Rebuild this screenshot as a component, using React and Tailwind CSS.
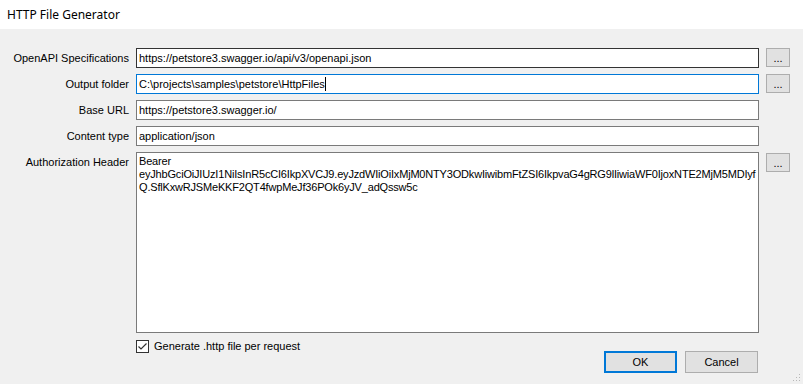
import React from "react";

const font = { fontFamily: '"Liberation Sans", Arial, sans-serif' };

function Label({ children }) {
  return (
    <div className="h-[20px] flex items-center justify-end text-[11px] text-black whitespace-nowrap leading-[13px]">
      {children}
    </div>
  );
}

function TextBox({ value, border = "border-[#7a7a7a]", caret = false }) {
  return (
    <div className={`h-[20px] border ${border} bg-white flex items-center pl-[2px] text-[11px] leading-[13px] text-black whitespace-nowrap overflow-hidden`}>
      <span>{value}</span>
      {caret && <span className="inline-block w-px h-[14px] bg-black" />}
    </div>
  );
}

function DotsButton() {
  return (
    <div className="w-[24px] h-[19px] border border-[#adadad] bg-[#e1e1e1] flex items-center justify-center text-[11px] leading-[13px] text-black pt-[2px]">
      ...
    </div>
  );
}

export default function App() {
  return (
    <div className="relative w-[803px] h-[384px] bg-[#f0f0f0] flex flex-col overflow-hidden" style={font}>
      <div className="h-[29px] bg-white flex items-center pl-[7px] text-[12px] text-black" style={{ fontFamily: '"Noto Sans", "Open Sans", sans-serif' }}>
        HTTP File Generator
      </div>
      <div className="pt-[19px] grid grid-cols-[126px_623px_24px] gap-x-[7px] gap-y-[6px] pl-0">
        <div className="pr-[1px] -mr-[4px]"><Label>OpenAPI Specifications</Label></div>
        <div className="ml-[3px] -mr-[3px]"><TextBox value="https://petstore3.swagger.io/api/v3/openapi.json" border="border-[#333333]" /></div>
        <div className="ml-[3px]"><DotsButton /></div>

        <div className="pr-[1px] -mr-[4px]"><Label>Output folder</Label></div>
        <div className="ml-[3px] -mr-[3px]"><TextBox value="C:\projects\samples\petstore\HttpFiles" border="border-[#0078d7]" caret /></div>
        <div className="ml-[3px]"><DotsButton /></div>

        <div className="pr-[1px] -mr-[4px]"><Label>Base URL</Label></div>
        <div className="ml-[3px] -mr-[3px]"><TextBox value="https://petstore3.swagger.io/" /></div>
        <div />

        <div className="pr-[1px] -mr-[4px]"><Label>Content type</Label></div>
        <div className="ml-[3px] -mr-[3px]"><TextBox value="application/json" /></div>
        <div />

        <div className="pr-[1px] -mr-[4px]"><Label>Authorization Header</Label></div>
        <div className="ml-[3px] -mr-[3px]">
          <div className="h-[181px] border border-[#7a7a7a] bg-white pt-[2px] pl-[2px] text-[11px] leading-[13px] text-black whitespace-nowrap overflow-hidden tracking-[-0.18px]">
            <div>Bearer</div>
            <div>eyJhbGciOiJIUzI1NiIsInR5cCI6IkpXVCJ9.eyJzdWIiOiIxMjM0NTY3ODkwIiwibmFtZSI6IkpvaG4gRG9lIiwiaWF0IjoxNTE2MjM5MDIyf</div>
            <div>Q.SflKxwRJSMeKKF2QT4fwpMeJf36POk6yJV_adQssw5c</div>
          </div>
        </div>
        <div className="ml-[3px] pt-[1px]"><DotsButton /></div>

        <div />
        <div className="ml-[3px] -mr-[3px] flex justify-between items-start">
          <div className="mt-[1px] flex items-center gap-[5px] h-[13px] text-[11px] leading-[13px] text-black">
            <div className="w-[13px] h-[13px] border border-[#333333] bg-white flex items-center justify-center">
              <svg width="11" height="11" viewBox="0 0 11 11">
                <path d="M1.5 5.5 L4 8 L9.5 2.5" fill="none" stroke="#333333" strokeWidth="1.2" />
              </svg>
            </div>
            <span className="whitespace-nowrap">Generate .http file per request</span>
          </div>
          <div className="mt-[12px] flex gap-[8px] pr-[1px]">
            <div className="w-[73px] h-[22px] border-2 border-[#0078d7] bg-[#e1e1e1] flex items-center justify-center text-[11px] text-black">OK</div>
            <div className="w-[73px] h-[22px] border border-[#adadad] bg-[#e1e1e1] flex items-center justify-center text-[11px] text-black">Cancel</div>
          </div>
        </div>
        <div />
      </div>
      <svg className="absolute right-[2px] bottom-[2px]" width="8" height="8" viewBox="0 0 8 8">
        <rect x="6" y="0" width="1" height="1" fill="#b8b8b8" />
        <rect x="3" y="3" width="1" height="1" fill="#b8b8b8" />
        <rect x="6" y="3" width="1" height="1" fill="#b8b8b8" />
        <rect x="0" y="6" width="1" height="1" fill="#b8b8b8" />
        <rect x="3" y="6" width="1" height="1" fill="#b8b8b8" />
        <rect x="6" y="6" width="1" height="1" fill="#b8b8b8" />
      </svg>
    </div>
  );
}
